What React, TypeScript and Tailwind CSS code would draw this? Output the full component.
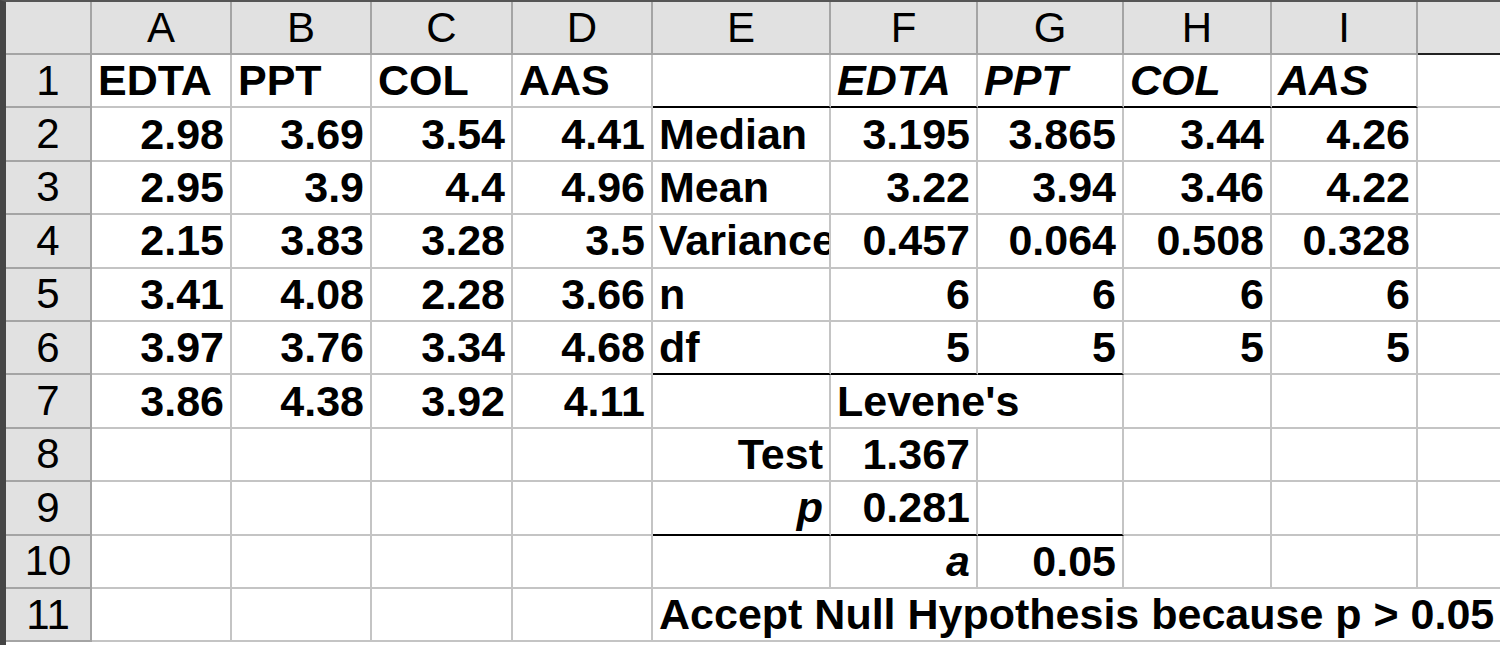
import React from "react";

type Cell = {
  v?: string;
  right?: boolean;
  italic?: boolean;
  span?: number;
  thick?: boolean;
};

const cols = ["A", "B", "C", "D", "E", "F", "G", "H", "I", ""];

const n = (v: string): Cell => ({ v, right: true });
const l = (v: string): Cell => ({ v });
const e: Cell = {};

// each row: A..J (span shortens the row)
const rows: Cell[][] = [
  [l("EDTA"), l("PPT"), l("COL"), l("AAS"), { thick: true }, { v: "EDTA", italic: true, thick: true }, { v: "PPT", italic: true, thick: true }, { v: "COL", italic: true, thick: true }, { v: "AAS", italic: true, thick: true }, e],
  [n("2.98"), n("3.69"), n("3.54"), n("4.41"), l("Median"), n("3.195"), n("3.865"), n("3.44"), n("4.26"), e],
  [n("2.95"), n("3.9"), n("4.4"), n("4.96"), l("Mean"), n("3.22"), n("3.94"), n("3.46"), n("4.22"), e],
  [n("2.15"), n("3.83"), n("3.28"), n("3.5"), l("Variance"), n("0.457"), n("0.064"), n("0.508"), n("0.328"), e],
  [n("3.41"), n("4.08"), n("2.28"), n("3.66"), l("n"), n("6"), n("6"), n("6"), n("6"), e],
  [n("3.97"), n("3.76"), n("3.34"), n("4.68"), { v: "df", thick: true }, { v: "5", right: true, thick: true }, { v: "5", right: true, thick: true }, n("5"), n("5"), e],
  [n("3.86"), n("4.38"), n("3.92"), n("4.11"), e, { v: "Levene's", span: 2 }, e, e, e],
  [e, e, e, e, n("Test"), n("1.367"), e, e, e, e],
  [e, e, e, e, { v: "p", right: true, italic: true, thick: true }, { v: "0.281", right: true, thick: true }, { thick: true }, e, e, e],
  [e, e, e, e, e, { v: "a", right: true, italic: true }, n("0.05"), e, e, e],
  [e, e, e, e, { v: "Accept Null Hypothesis because p > 0.05", span: 6 }],
];

function SheetCell({ cell }: { cell: Cell }) {
  const span =
    cell.span === 6 ? "col-span-6 border-r-0" : cell.span === 2 ? "col-span-2" : "";
  return (
    <div
      className={`flex items-center overflow-hidden whitespace-nowrap px-[6px] font-bold border-r-2 border-b-2 border-r-[#c4c4c4] ${
        cell.thick ? "border-b-black" : "border-b-[#c4c4c4]"
      } ${cell.right ? "justify-end" : "justify-start"} ${cell.italic ? "italic" : ""} ${span}`}
    >
      {cell.v}
    </div>
  );
}

export default function App() {
  return (
    <div
      className="w-[1500px] h-[645px] overflow-hidden bg-white text-black border-t-2 border-t-[#555] border-l-[6px] border-l-[#454545]"
      style={{ fontFamily: '"Liberation Sans", Arial, sans-serif' }}
    >
      <div className="grid grid-cols-[86px_140px_140px_141px_140px_178px_147px_146px_148px_146px_88px] grid-rows-[53px_repeat(11,53.4px)] text-[43px] leading-none">
        <div className="bg-[#e1e1e1] border-r-2 border-b-2 border-[#a4a4a4]" />
        {cols.map((c, i) => (
          <div
            key={i}
            className={`flex items-center justify-center bg-[#e1e1e1] border-r-2 border-r-[#a4a4a4] border-b-2 text-[42px] ${
              c === "" ? "border-b-[#222]" : "border-b-[#a4a4a4]"
            }`}
          >
            {c}
          </div>
        ))}
        {rows.map((row, r) => (
          <React.Fragment key={r}>
            <div className="flex items-center justify-center bg-[#e1e1e1] border-r-2 border-b-2 border-[#a4a4a4] text-[42px]">
              {r + 1}
            </div>
            {row.map((cell, c) => (
              <SheetCell key={c} cell={cell} />
            ))}
          </React.Fragment>
        ))}
      </div>
    </div>
  );
}
